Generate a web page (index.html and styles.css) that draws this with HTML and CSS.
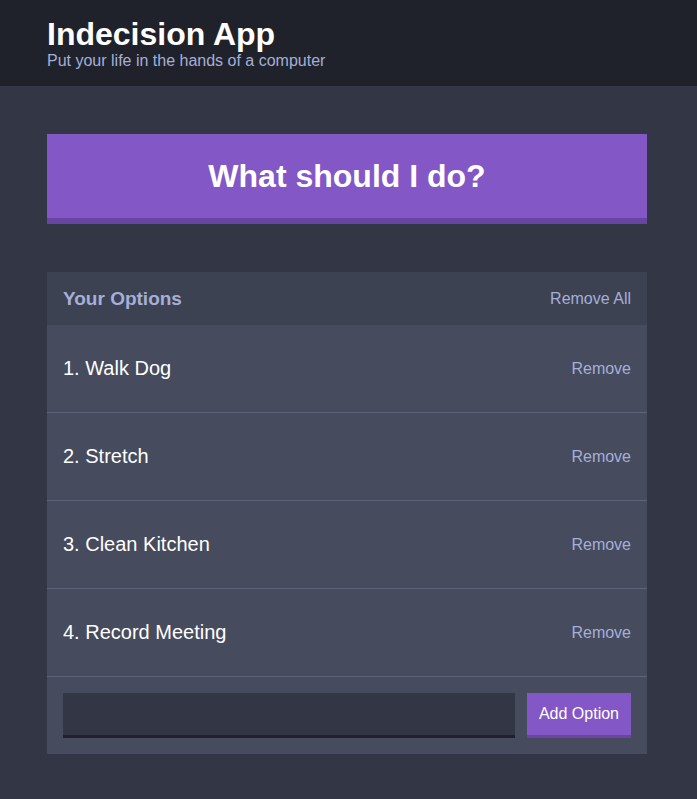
FILE: index.html
```html
<!DOCTYPE html>
<html lang="en">
<head>
<meta charset="utf-8">
<title>Indecision App</title>
<link rel="stylesheet" href="styles.css">
</head>
<body>
<header class="header">
  <div class="container">
    <h1 class="header__title">Indecision App</h1>
    <h2 class="header__subtitle">Put your life in the hands of a computer</h2>
  </div>
</header>
<main class="container">
  <button class="big-button">What should I do?</button>
  <section class="widget">
    <div class="widget-header">
      <h3 class="widget-header__title">Your Options</h3>
      <button class="button--link">Remove All</button>
    </div>
    <div class="option">
      <p class="option__text">1. Walk Dog</p>
      <button class="button--link">Remove</button>
    </div>
    <div class="option">
      <p class="option__text">2. Stretch</p>
      <button class="button--link">Remove</button>
    </div>
    <div class="option">
      <p class="option__text">3. Clean Kitchen</p>
      <button class="button--link">Remove</button>
    </div>
    <div class="option">
      <p class="option__text">4. Record Meeting</p>
      <button class="button--link">Remove</button>
    </div>
    <form class="add-option">
      <input class="add-option__input" type="text" name="option">
      <button class="button" type="button">Add Option</button>
    </form>
  </section>
</main>
</body>
</html>
```
FILE: styles.css
```css
* { box-sizing: border-box; }
html, body { margin: 0; padding: 0; }
body {
  background: #333745;
  font-family: "Liberation Sans", Arial, Helvetica, sans-serif;
  font-size: 16px;
  line-height: normal;
  color: #ffffff;
}
.container {
  width: 600px;
  margin-left: 47px;
}
.header {
  background: #20222b;
  padding: 16px 0;
  margin-bottom: 48px;
}
.header__title {
  margin: 0;
  font-size: 32px;
  line-height: 36px;
  font-weight: bold;
  color: #ffffff;
}
.header__subtitle {
  margin: 0;
  font-size: 16px;
  line-height: 18px;
  font-weight: normal;
  color: #a5afd7;
}
.big-button {
  display: block;
  width: 100%;
  background: #8357c5;
  border: none;
  border-bottom: 6px solid #6a44a3;
  color: #ffffff;
  font-family: inherit;
  font-weight: bold;
  font-size: 32px;
  line-height: 36px;
  padding: 24px;
  margin: 0 0 48px 0;
}
.widget {
  background: #464b5e;
  margin-bottom: 48px;
}
.widget-header {
  background: #3c4251;
  display: flex;
  justify-content: space-between;
  align-items: center;
  padding: 16px;
}
.widget-header__title {
  margin: 0;
  font-size: 19px;
  line-height: 21px;
  font-weight: bold;
  color: #a5afd7;
}
.button--link {
  background: none;
  border: none;
  padding: 0;
  color: #a5afd7;
  font-family: inherit;
  font-size: 16px;
  line-height: 18px;
}
.option {
  display: flex;
  justify-content: space-between;
  align-items: center;
  padding: 16px;
  border-bottom: 1px solid #5d6279;
}
.option__text {
  margin: 16px 0;
  font-size: 20px;
  line-height: 23px;
  color: #ffffff;
}
.add-option {
  display: flex;
  padding: 16px;
  margin: 0;
}
.add-option__input {
  flex-grow: 1;
  background: #333745;
  border: none;
  border-bottom: 3px solid #20222b;
  color: #a5afd7;
  font-family: inherit;
  font-size: 16px;
  line-height: 18px;
  margin-right: 12px;
  padding: 12px;
  outline: none;
}
.button {
  background: #8357c5;
  border: none;
  border-bottom: 3px solid #6a44a3;
  color: #ffffff;
  font-family: inherit;
  font-size: 16px;
  line-height: 18px;
  font-weight: 500;
  padding: 12px;
}
```
